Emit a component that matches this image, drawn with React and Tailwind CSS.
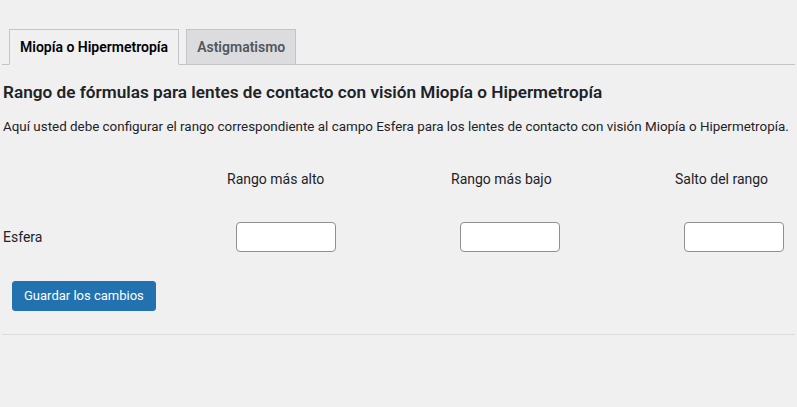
import React from "react";

const columns = ["Rango más alto", "Rango más bajo", "Salto del rango"];

export default function App() {
  return (
    <div
      className="min-h-[407px] w-full bg-[#f0f0f1] text-[#1d2327] px-[2px] overflow-hidden"
      style={{ fontFamily: 'Roboto, "Noto Sans", sans-serif' }}
    >
      <nav className="flex border-b border-[#c3c4c7] pt-[29px]">
        <Tab active>Miopía o Hipermetropía</Tab>
        <Tab>Astigmatismo</Tab>
      </nav>

      <h2 className="mt-[14px] pl-px text-[17.2px] font-semibold leading-[26px]">
        Rango de fórmulas para lentes de contacto con visión Miopía o Hipermetropía
      </h2>
      <p className="mt-[12px] pl-px text-[13.4px] leading-[20px]">
        Aquí usted debe configurar el rango correspondiente al campo Esfera para los lentes de contacto con visión Miopía o Hipermetropía.
      </p>

      <div className="mt-[32px] flex pl-px">
        <div className="w-[224px] shrink-0" />
        {columns.map((c) => (
          <div key={c} className="w-[224px] shrink-0 text-[14px] leading-[20px]">
            {c}
          </div>
        ))}
      </div>

      <div className="mt-[33px] flex items-center pl-px">
        <div className="w-[224px] shrink-0 text-[14px]">Esfera</div>
        {columns.map((c) => (
          <div key={c} className="w-[224px] shrink-0 pl-[9px]">
            <input
              type="text"
              className="block h-[30px] w-[100px] rounded-[4px] border border-[#8c8f94] bg-white px-2 text-[14px] outline-none"
            />
          </div>
        ))}
      </div>

      <div className="mt-[29px] pl-[10px]">
        <button className="h-[30px] rounded-[3px] border border-[#2271b1] bg-[#2271b1] px-[11px] text-[13px] text-white">
          Guardar los cambios
        </button>
      </div>

      <hr className="mt-[23px] border-0 border-t border-[#dcdcde]" />
    </div>
  );
}

function Tab({ active, children }) {
  return (
    <div
      className={
        "ml-[7px] -mb-px h-[36px] border px-[10px] text-[14px] font-semibold leading-[24px] py-[5px] " +
        (active
          ? "border-[#c3c4c7] border-b-[#f0f0f1] bg-[#f0f0f1] text-black"
          : "border-[#c3c4c7] bg-[#dcdcde] text-[#50575e]")
      }
    >
      {children}
    </div>
  );
}
